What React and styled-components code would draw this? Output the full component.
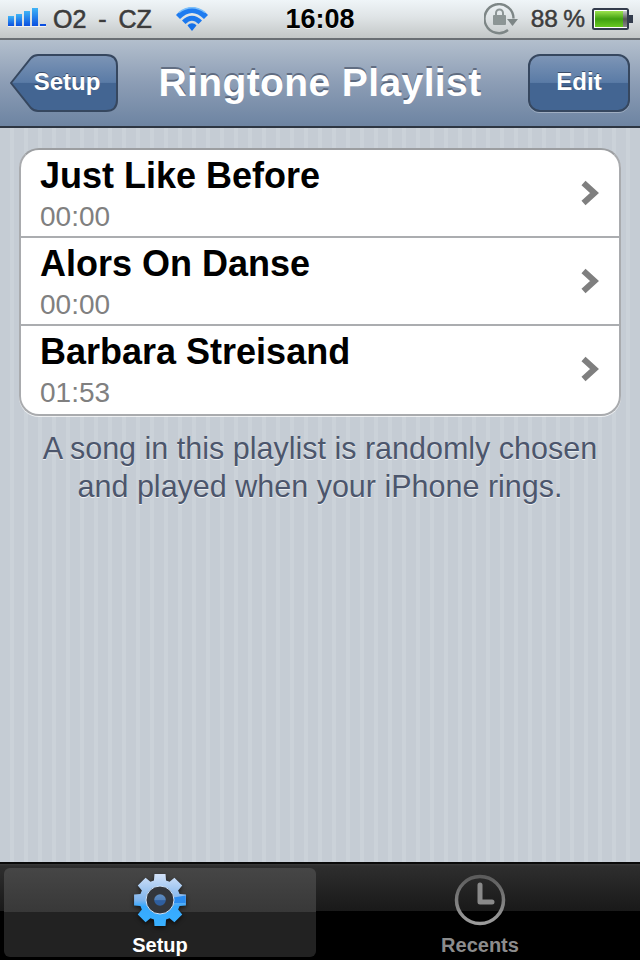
import React from 'react';
import styled, { createGlobalStyle } from 'styled-components';

const GlobalStyle = createGlobalStyle`
  html, body {
    margin: 0;
    padding: 0;
    background: #000;
  }
  body {
    font-family: "Liberation Sans", Arial, sans-serif;
  }
`;

const Phone = styled.div`
  width: 640px;
  height: 960px;
  display: flex;
  flex-direction: column;
  overflow: hidden;
`;

const StatusBar = styled.div`
  height: 38px;
  flex: none;
  display: grid;
  grid-template-columns: 1fr auto 1fr;
  align-items: center;
  padding: 0 6px 0 8px;
  background: linear-gradient(#eff5f8 0%, #dfe4e6 45%, #c3c7c7 100%);
  border-bottom: 2px solid #6a6f74;
`;

const StatusSide = styled.div`
  display: flex;
  align-items: center;
  justify-content: ${p => (p.$end ? 'flex-end' : 'flex-start')};
`;

const Carrier = styled.span`
  margin-left: 7px;
  font-size: 25px;
  word-spacing: 5px;
  color: #3c3c3c;
  -webkit-text-stroke: 0.6px #3c3c3c;
  text-shadow: 0 1px 0 rgba(255, 255, 255, 0.7);
  white-space: pre;
`;

const WifiGlyph = styled.svg`
  margin-left: 24px;
`;

const Clock = styled.span`
  margin-left: -2px;
  font-size: 27px;
  font-weight: bold;
  color: #000;
  text-shadow: 0 1px 0 rgba(255, 255, 255, 0.7);
`;

const Percent = styled.span`
  margin: 0 7px 0 13px;
  font-size: 24.5px;
  word-spacing: -1.5px;
  color: #3c3c3c;
  -webkit-text-stroke: 0.5px #3c3c3c;
  text-shadow: 0 1px 0 rgba(255, 255, 255, 0.7);
  white-space: pre;
`;

const NavBar = styled.div`
  height: 86px;
  flex: none;
  display: grid;
  grid-template-columns: 1fr auto 1fr;
  align-items: center;
  padding: 0 10px;
  background: linear-gradient(#b3bfcd 0%, #8c9db5 50%, #6d84a2 100%);
  border-bottom: 2px solid #2d3642;
`;

const NavTitle = styled.div`
  font-size: 39px;
  letter-spacing: 0.4px;
  font-weight: bold;
  color: #fff;
  text-shadow: 0 -2px 0 rgba(60, 70, 90, 0.6);
`;

const NavButton = styled.div`
  position: relative;
  width: ${p => p.$width}px;
  height: 58px;
  box-sizing: border-box;
  display: flex;
  align-items: center;
  justify-content: center;
  justify-self: ${p => (p.$end ? 'end' : 'start')};
  padding-left: ${p => (p.$back ? 6 : 0)}px;
  padding-bottom: 2px;
  font-size: 24px;
  font-weight: bold;
  color: #fff;
  text-shadow: 0 -1px 0 rgba(30, 40, 60, 0.6);
  ${p => !p.$back && `
    border-radius: 12px;
    border: 2px solid #36475f;
    background: linear-gradient(#7d95b6 0%, #5a7ba6 49%, #436592 50%, #436592 100%);
    box-shadow: 0 1px 0 rgba(255, 255, 255, 0.3);
  `}
`;

const BackShape = styled.svg`
  position: absolute;
  inset: 0;
`;

const NavLabel = styled.span`
  position: relative;
`;

const Content = styled.div`
  flex: 1;
  display: flex;
  flex-direction: column;
  padding: 20px 19px 0;
  background: repeating-linear-gradient(90deg, #c5ccd4 0, #c5ccd4 10px, #cbd2d9 10px, #cbd2d9 14px);
`;

const Group = styled.div`
  border: 2px solid #a9abae;
  border-top-color: #9c9ea1;
  border-radius: 20px;
  background: #fff;
  overflow: hidden;
  box-shadow: 0 1px 0 rgba(255, 255, 255, 0.7);
`;

const Row = styled.div`
  height: ${p => (p.$first ? 86 : p.$last ? 90 : 88)}px;
  box-sizing: border-box;
  display: flex;
  align-items: center;
  justify-content: space-between;
  padding: 3px 19px ${p => (p.$last ? 2 : 0)}px;
  border-top: ${p => (p.$first ? 'none' : '2px solid #abadb0')};
`;

const RowText = styled.div`
  display: flex;
  flex-direction: column;
`;

const SongTitle = styled.div`
  font-size: 36px;
  line-height: 40px;
  font-weight: bold;
  color: #000;
`;

const SongTime = styled.div`
  margin-top: 5px;
  font-size: 28px;
  line-height: 32px;
  color: #808080;
`;

const ChevronGlyph = styled.svg`
  margin-top: -4px;
`;

const FooterNote = styled.div`
  margin-top: 13px;
  font-size: 30.5px;
  line-height: 38px;
  text-align: center;
  color: #4c566c;
  text-shadow: 0 1px 0 rgba(255, 255, 255, 0.7);
`;

const TabBar = styled.div`
  height: 98px;
  flex: none;
  box-sizing: border-box;
  display: grid;
  grid-template-columns: 1fr 1fr;
  gap: 8px;
  padding: 6px 4px 4px;
  background: linear-gradient(#0a0a0a 0, #0a0a0a 2px, #3a3a3a 2px, #2e2e2e 4px, #191919 50%, #000 50%, #000 100%);
`;

const Tab = styled.div`
  display: flex;
  flex-direction: column;
  align-items: center;
  border-radius: 6px;
  padding-top: 4px;
  background: ${p => (p.$active
    ? 'linear-gradient(#464646 0%, #383838 50%, #222 50%, #222 100%)'
    : 'transparent')};
`;

const TabLabel = styled.div`
  margin-top: 6px;
  font-size: 20px;
  font-weight: bold;
  color: ${p => (p.$active ? '#fff' : '#8c8c8c')};
`;

const GearGlyph = styled.svg`
  filter: drop-shadow(0 2px 2px rgba(0, 0, 0, 0.6));
`;

const SignalBars = () => (
  <svg width="38" height="24" viewBox="0 0 38 24">
    <defs>
      <linearGradient id="bar" x1="0" y1="0" x2="0" y2="1">
        <stop offset="0" stopColor="#3fb4f6" />
        <stop offset="1" stopColor="#0a4fe0" />
      </linearGradient>
    </defs>
    <rect x="0" y="9" width="6" height="10" fill="url(#bar)" />
    <rect x="8" y="7" width="6" height="12" fill="url(#bar)" />
    <rect x="16" y="4" width="6" height="15" fill="url(#bar)" />
    <rect x="24" y="1" width="6" height="18" fill="url(#bar)" />
    <rect x="32" y="17" width="6" height="2" fill="#0a4fe0" />
    <rect x="0" y="19" width="38" height="1" fill="#fff" opacity="0.7" />
  </svg>
);

const WifiIcon = () => (
  <WifiGlyph width="32" height="24" viewBox="0 0 32 24">
    <path d="M0 8 C9 -2 23 -2 32 8 L28 12 C20 4 12 4 4 12 Z" fill="#1f7cf0" />
    <path d="M6 13.5 C12 7 20 7 26 13.5 L22.5 17 C18 12.5 14 12.5 9.500 17 Z" fill="#1b78ee" />
    <path d="M11.500 18.500 C14 15.500 18 15.500 20.500 18.500 L16 24 Z" fill="#1470e8" />
    <path d="M3 5.500 C11 -0.800 21 -0.800 29 5.500" fill="none" stroke="#7cc0fa" strokeWidth="1.500" />
  </WifiGlyph>
);

const RotationLock = () => (
  <svg width="34" height="32" viewBox="0 0 34 32">
    <path d="M24 27 A14.500 14.500 0 1 1 29.500 15.500" fill="none" stroke="#7d8686" strokeWidth="2.400" />
    <path d="M23 16 L34 16 L28.500 23 Z" fill="#7d8686" />
    <rect x="9" y="12" width="13" height="10" rx="1" fill="#8c9595" />
    <path d="M12 12 V10 A3.500 3.500 0 0 1 19 10 V12" fill="none" stroke="#8c9595" strokeWidth="2" />
  </svg>
);

const Battery = () => (
  <svg width="42" height="22" viewBox="0 0 42 22">
    <defs>
      <linearGradient id="charge" x1="0" y1="0" x2="0" y2="1">
        <stop offset="0" stopColor="#9be24e" />
        <stop offset="0.5" stopColor="#3f9f10" />
        <stop offset="1" stopColor="#68c820" />
      </linearGradient>
      <linearGradient id="rest" x1="0" y1="0" x2="0" y2="1">
        <stop offset="0" stopColor="#c8cccc" />
        <stop offset="0.5" stopColor="#555" />
        <stop offset="1" stopColor="#888" />
      </linearGradient>
    </defs>
    <rect x="1" y="1" width="35" height="20" rx="1.500" fill="#fff" stroke="#333c4c" strokeWidth="2" />
    <rect x="3" y="3" width="28" height="16" fill="url(#charge)" />
    <rect x="31" y="3" width="4" height="16" fill="url(#rest)" />
    <rect x="37" y="7" width="4" height="8" fill="#333c4c" />
  </svg>
);

const BackButtonShape = () => (
  <BackShape width="108" height="58" viewBox="0 0 108 58">
    <defs>
      <linearGradient id="back" x1="0" y1="0" x2="0" y2="1">
        <stop offset="0" stopColor="#7d95b6" />
        <stop offset="0.49" stopColor="#5a7ba6" />
        <stop offset="0.5" stopColor="#436592" />
        <stop offset="1" stopColor="#436592" />
      </linearGradient>
    </defs>
    <path
      d="M1 29 L21 4 Q24 1 28 1 L96 1 Q107 1 107 12 L107 46 Q107 57 96 57 L28 57 Q24 57 21 54 Z"
      fill="url(#back)"
      stroke="#36475f"
      strokeWidth="2"
    />
  </BackShape>
);

const Chevron = () => (
  <ChevronGlyph width="20" height="26" viewBox="0 0 20 26">
    <path d="M3.500 3 L14.500 13 L3.500 23" fill="none" stroke="#7f7f7f" strokeWidth="6" />
  </ChevronGlyph>
);

const gearPath = (() => {
  const cx = 28;
  const cy = 28;
  const teeth = 8;
  let d = '';
  for (let i = 0; i < teeth; i += 1) {
    const a = (i * 2 * Math.PI) / teeth - Math.PI / 2;
    const pt = (r, off) => `${(cx + r * Math.cos(a + off)).toFixed(2)} ${(cy + r * Math.sin(a + off)).toFixed(2)}`;
    d += `${i === 0 ? 'M' : 'L'}${pt(20.5, -0.3)} L${pt(26.5, -0.21)} L${pt(26.5, 0.21)} L${pt(20.5, 0.3)} `;
  }
  return `${d}Z`;
})();

const GearIcon = () => (
  <GearGlyph width="56" height="56" viewBox="0 0 56 56">
    <defs>
      <linearGradient id="gear" x1="0" y1="0" x2="0" y2="1">
        <stop offset="0" stopColor="#d3e2f8" />
        <stop offset="0.5" stopColor="#7fb4ec" />
        <stop offset="0.62" stopColor="#36a9ff" />
        <stop offset="1" stopColor="#39b0ff" />
      </linearGradient>
      <linearGradient id="gearDot" x1="0" y1="0" x2="0" y2="1">
        <stop offset="0" stopColor="#5f8cc0" />
        <stop offset="0.5" stopColor="#4f7fb8" />
        <stop offset="0.55" stopColor="#2f5f9f" />
        <stop offset="1" stopColor="#2f5f9f" />
      </linearGradient>
    </defs>
    <path d={gearPath} fill="url(#gear)" />
    <path d="M41.500 25.500 L53.700 23.500 L53.700 31 L41.500 31 Z" fill="#2a8cf0" />
    <circle cx="28" cy="28" r="14" fill="#33363b" stroke="#cfe2f8" strokeWidth="1" />
    <circle cx="28" cy="28" r="5.800" fill="url(#gearDot)" />
  </GearGlyph>
);

const ClockIcon = () => (
  <svg width="56" height="56" viewBox="0 0 56 56">
    <defs>
      <linearGradient id="clockFace" x1="0" y1="0" x2="0" y2="1">
        <stop offset="0" stopColor="#5c5c5c" />
        <stop offset="1" stopColor="#9c9c9c" />
      </linearGradient>
    </defs>
    <circle cx="28" cy="28" r="23.500" fill="none" stroke="url(#clockFace)" strokeWidth="3.500" />
    <path d="M28 13 V30 H40" fill="none" stroke="#8a8a8a" strokeWidth="5" strokeLinecap="round" strokeLinejoin="round" />
  </svg>
);

const songs = [
  { title: 'Just Like Before', time: '00:00' },
  { title: 'Alors On Danse', time: '00:00' },
  { title: 'Barbara Streisand', time: '01:53' },
];

const App = () => (
  <Phone>
    <GlobalStyle />
    <StatusBar>
      <StatusSide>
        <SignalBars />
        <Carrier>O2 - CZ</Carrier>
        <WifiIcon />
      </StatusSide>
      <Clock>16:08</Clock>
      <StatusSide $end>
        <RotationLock />
        <Percent>88 %</Percent>
        <Battery />
      </StatusSide>
    </StatusBar>
    <NavBar>
      <NavButton $back $width={108}>
        <BackButtonShape />
        <NavLabel>Setup</NavLabel>
      </NavButton>
      <NavTitle>Ringtone Playlist</NavTitle>
      <NavButton $end $width={102}>Edit</NavButton>
    </NavBar>
    <Content>
      <Group>
        {songs.map((song, i) => (
          <Row key={song.title} $first={i === 0} $last={i === songs.length - 1}>
            <RowText>
              <SongTitle>{song.title}</SongTitle>
              <SongTime>{song.time}</SongTime>
            </RowText>
            <Chevron />
          </Row>
        ))}
      </Group>
      <FooterNote>
        A song in this playlist is randomly chosen<br />
        and played when your iPhone rings.
      </FooterNote>
    </Content>
    <TabBar>
      <Tab $active>
        <GearIcon />
        <TabLabel $active>Setup</TabLabel>
      </Tab>
      <Tab>
        <ClockIcon />
        <TabLabel>Recents</TabLabel>
      </Tab>
    </TabBar>
  </Phone>
);

export default App;
